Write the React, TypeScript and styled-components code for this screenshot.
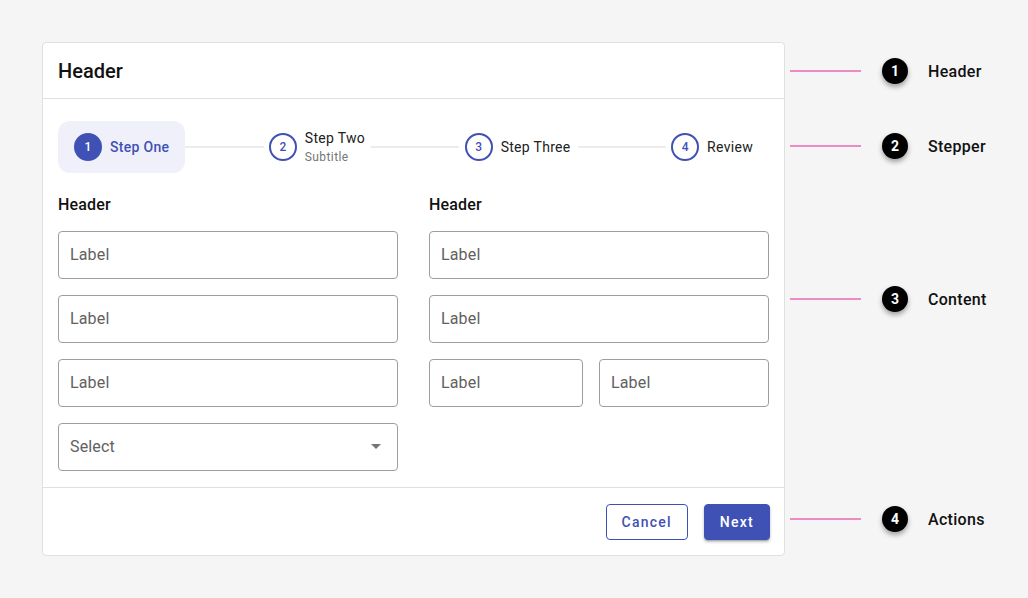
import React from "react";
import styled, { createGlobalStyle } from "styled-components";

const GlobalStyle = createGlobalStyle`
  html, body { margin: 0; padding: 0; background: #f5f5f5; }
  body { font-family: Roboto, "Noto Sans", Arial, sans-serif; color: #212121; }
  * { box-sizing: border-box; }
`;

const PRIMARY = "#3f51b5";

const Page = styled.div`
  position: relative;
  width: 1028px;
  height: 598px;
  padding: 42px;
  background: #f5f5f5;
`;

const Card = styled.div`
  width: 743px;
  height: 514px;
  background: #fff;
  border: 1px solid #e0e0e0;
  border-radius: 4px;
  display: flex;
  flex-direction: column;
`;

const CardHeader = styled.div`
  height: 56px;
  display: flex;
  align-items: center;
  padding: 0 15px;
  border-bottom: 1px solid #e0e0e0;
  font-size: 20px;
  font-weight: 500;
  color: #111;
`;

const Body = styled.div`
  flex: 1;
  padding: 22px 15px 0;
  border-bottom: 1px solid #e0e0e0;
`;

const Stepper = styled.div`
  display: flex;
  align-items: center;
  height: 52px;
`;

const Step = styled.div<{ $active?: boolean; $padL: number; $padR: number }>`
  display: flex;
  align-items: center;
  gap: 8px;
  height: 52px;
  padding: 0 ${(p) => p.$padR}px 0 ${(p) => p.$padL}px;
  border-radius: 12px;
  background: ${(p) => (p.$active ? "#eff0f9" : "transparent")};
`;

const StepCircle = styled.div<{ $active?: boolean }>`
  width: 28px;
  height: 28px;
  border-radius: 50%;
  display: flex;
  align-items: center;
  justify-content: center;
  font-size: 12px;
  font-weight: 500;
  color: ${(p) => (p.$active ? "#fff" : PRIMARY)};
  background: ${(p) => (p.$active ? PRIMARY : "#fff")};
  border: 2px solid ${PRIMARY};
  flex-shrink: 0;
`;

const StepText = styled.div`
  display: flex;
  flex-direction: column;
`;

const StepLabel = styled.span<{ $active?: boolean }>`
  font-size: 14px;
  line-height: 18px;
  font-weight: ${(p) => (p.$active ? 500 : 400)};
  color: ${(p) => (p.$active ? PRIMARY : "#212121")};
  white-space: nowrap;
  letter-spacing: 0.3px;
`;

const StepSub = styled.span`
  font-size: 12px;
  line-height: 16px;
  color: #757575;
  margin-top: 2px;
  letter-spacing: 0.4px;
`;

const Connector = styled.div<{ $grow: number }>`
  flex: ${(p) => p.$grow} 1 0;
  height: 2px;
  background: #ececec;
`;

const Columns = styled.div`
  display: grid;
  grid-template-columns: 1fr 1fr;
  gap: 31px;
  margin-top: 21px;
`;

const Column = styled.div`
  display: flex;
  flex-direction: column;
  gap: 16px;
`;

const SectionTitle = styled.div`
  font-size: 16px;
  font-weight: 500;
  line-height: 22px;
  height: 21px;
  color: #111;
  letter-spacing: 0.15px;
`;

const FieldRow = styled.div`
  display: grid;
  grid-template-columns: 154fr 170fr;
  gap: 16px;
`;

const Field = styled.div`
  height: 48px;
  border: 1px solid #9e9e9e;
  border-radius: 4px;
  display: flex;
  align-items: center;
  justify-content: space-between;
  padding: 0 16px 2px 11px;
  font-size: 16px;
  color: #616161;
  letter-spacing: 0.15px;
`;

const Footer = styled.div`
  height: 67px;
  display: flex;
  align-items: center;
  justify-content: flex-end;
  gap: 16px;
  padding: 0 14px;
`;

const Button = styled.button<{ $primary?: boolean }>`
  height: 36px;
  padding: 0 15px;
  border-radius: 4px;
  font-family: Roboto, Arial, sans-serif;
  font-size: 14px;
  font-weight: 500;
  letter-spacing: 1.25px;
  cursor: pointer;
  border: 1px solid ${PRIMARY};
  color: ${(p) => (p.$primary ? "#fff" : PRIMARY)};
  background: ${(p) => (p.$primary ? PRIMARY : "#fff")};
  box-shadow: ${(p) =>
    p.$primary ? "0 2px 3px rgba(0,0,0,0.25), 0 1px 1px rgba(0,0,0,0.14)" : "none"};
`;

const Callout = styled.div<{ $top: number }>`
  position: absolute;
  left: 790px;
  top: ${(p) => p.$top}px;
  height: 26px;
  display: flex;
  align-items: center;
`;

const CalloutLine = styled.div`
  width: 71px;
  height: 2px;
  background: #ec8cc4;
`;

const CalloutBadge = styled.div`
  width: 26px;
  height: 26px;
  border-radius: 50%;
  background: #000;
  color: #fff;
  font-size: 14px;
  font-weight: 700;
  display: flex;
  align-items: center;
  justify-content: center;
  margin-left: 21px;
  box-shadow: 0 3px 5px rgba(0, 0, 0, 0.35);
`;

const CalloutLabel = styled.div`
  margin-left: 20px;
  font-size: 16px;
  font-weight: 500;
  color: #111;
  letter-spacing: 0.3px;
`;

const Caret = () => (
  <svg width="10" height="5" viewBox="0 0 10 5">
    <path d="M0 0 L10 0 L5 5 Z" fill="#757575" />
  </svg>
);

const steps = [
  { n: 1, label: "Step One", active: true, l: 16, r: 16, grow: 0 },
  { n: 2, label: "Step Two", sub: "Subtitle", l: 5, r: 6, grow: 78 },
  { n: 3, label: "Step Three", l: 6, r: 7, grow: 87 },
  { n: 4, label: "Review", l: 5, r: 16, grow: 88 },
];

const callouts = [
  { n: 1, label: "Header", top: 58 },
  { n: 2, label: "Stepper", top: 133 },
  { n: 3, label: "Content", top: 286 },
  { n: 4, label: "Actions", top: 506 },
];

export default function App() {
  return (
    <>
      <GlobalStyle />
      <Page>
        <Card>
          <CardHeader>Header</CardHeader>
          <Body>
            <Stepper>
              {steps.map((s, i) => (
                <React.Fragment key={s.n}>
                  {i > 0 && <Connector $grow={s.grow} />}
                  <Step $active={s.active} $padL={s.l} $padR={s.r}>
                    <StepCircle $active={s.active}>{s.n}</StepCircle>
                    <StepText>
                      <StepLabel $active={s.active}>{s.label}</StepLabel>
                      {s.sub && <StepSub>{s.sub}</StepSub>}
                    </StepText>
                  </Step>
                </React.Fragment>
              ))}
            </Stepper>
            <Columns>
              <Column>
                <SectionTitle>Header</SectionTitle>
                <Field>Label</Field>
                <Field>Label</Field>
                <Field>Label</Field>
                <Field>
                  Select
                  <Caret />
                </Field>
              </Column>
              <Column>
                <SectionTitle>Header</SectionTitle>
                <Field>Label</Field>
                <Field>Label</Field>
                <FieldRow>
                  <Field>Label</Field>
                  <Field>Label</Field>
                </FieldRow>
              </Column>
            </Columns>
          </Body>
          <Footer>
            <Button>Cancel</Button>
            <Button $primary>Next</Button>
          </Footer>
        </Card>
        {callouts.map((c) => (
          <Callout key={c.n} $top={c.top}>
            <CalloutLine />
            <CalloutBadge>{c.n}</CalloutBadge>
            <CalloutLabel>{c.label}</CalloutLabel>
          </Callout>
        ))}
      </Page>
    </>
  );
}
